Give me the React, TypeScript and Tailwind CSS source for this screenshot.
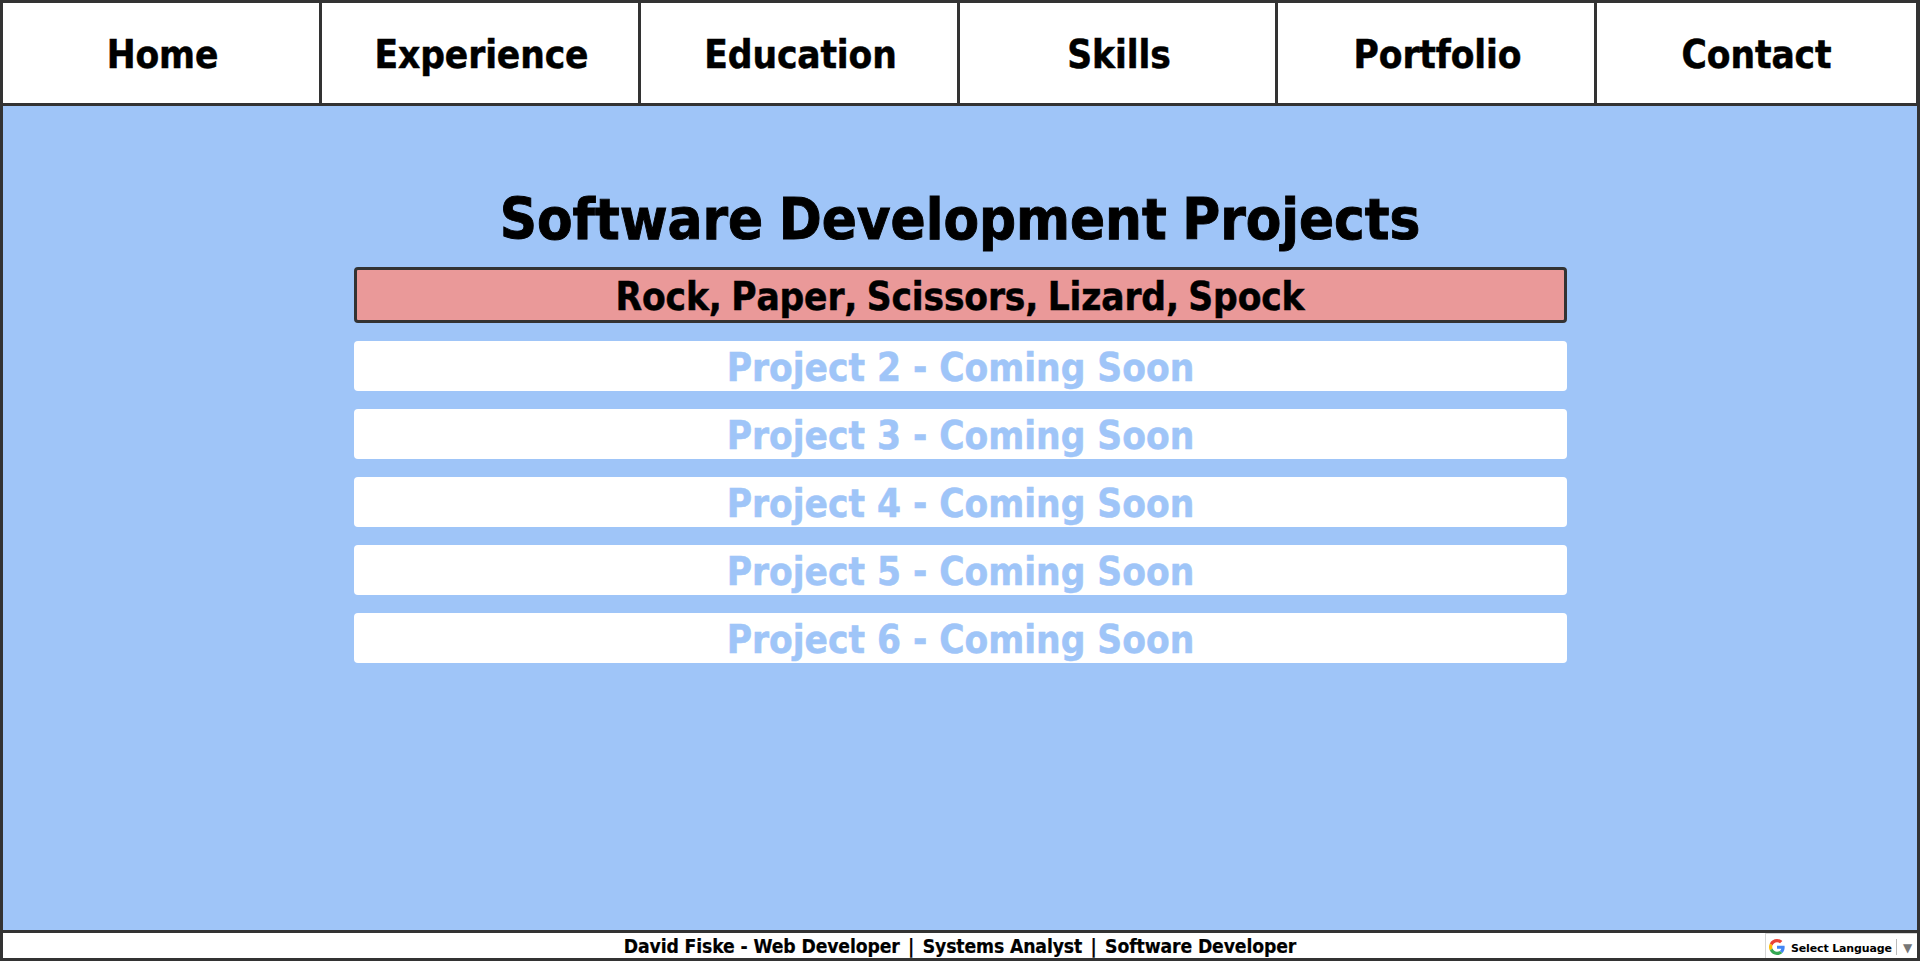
const nav = ["Home", "Experience", "Education", "Skills", "Portfolio", "Contact"];

const roles = ["David Fiske - Web Developer", "Systems Analyst", "Software Developer"];

const upcoming = [2, 3, 4, 5, 6];

function GoogleMark() {
  return (
    <svg viewBox="0 0 48 48" className="size-4 shrink-0">
      <path fill="#ea4335" d="M24 9.5c3.54 0 6.71 1.22 9.21 3.6l6.85-6.85C35.9 2.38 30.47 0 24 0 14.62 0 6.51 5.38 2.56 13.22l7.98 6.19C12.43 13.72 17.74 9.5 24 9.5z" />
      <path fill="#4285f4" d="M46.98 24.55c0-1.57-.15-3.09-.38-4.55H24v9.02h12.94c-.58 2.96-2.26 5.48-4.78 7.18l7.73 6c4.51-4.18 7.09-10.36 7.09-17.65z" />
      <path fill="#fbbc05" d="M10.53 28.59c-.48-1.45-.76-2.99-.76-4.59s.27-3.14.76-4.59l-7.98-6.19C.92 16.46 0 20.12 0 24c0 3.88.92 7.54 2.56 10.78l7.97-6.19z" />
      <path fill="#34a853" d="M24 48c6.48 0 11.93-2.13 15.89-5.81l-7.73-6c-2.15 1.45-4.92 2.3-8.16 2.3-6.26 0-11.57-4.22-13.47-9.91l-7.98 6.19C6.51 42.62 14.62 48 24 48z" />
    </svg>
  );
}

export default function App() {
  return (
    <div className="flex h-[961px] w-full flex-col border-[3px] border-[#333] bg-[#9fc5f8] font-['DejaVu_Sans_Condensed','DejaVu_Sans',sans-serif] font-bold [font-stretch:condensed] text-black">
      <nav className="grid h-[103px] shrink-0 grid-cols-[319px_319px_319px_318px_319px_319px] border-b-[3px] border-[#333] bg-[#333]">
        {nav.map((label) => (
          <a key={label} className="flex items-center justify-center border-r-[3px] border-[#333] bg-white pt-1 pl-[3px] text-[38.4px] leading-none tracking-[-0.1px] [-webkit-text-stroke:0.5px] last:border-r-0 last:pl-0">
            {label}
          </a>
        ))}
      </nav>
      <main className="flex flex-1 flex-col items-center pt-[71px]">
        <h1 className="mb-[5px] flex h-[85px] items-center text-[57.6px] leading-none tracking-[-0.04px] [-webkit-text-stroke:0.9px] [word-spacing:-2.4px]">Software Development Projects</h1>
        <div className="flex w-[1213px] flex-col gap-[18px] text-[38.4px] leading-none [-webkit-text-stroke:0.5px]">
          <a className="flex h-14 items-center justify-center rounded-[4px] border-[3px] border-[#333] bg-[#ea9999] pt-1 tracking-[-0.14px] [font-kerning:none] [word-spacing:-2.4px]">
            Rock, Paper, Scissors, Lizard, Spock
          </a>
          {upcoming.map((n) => (
            <div key={n} className="flex h-[50px] items-center justify-center rounded-[4px] bg-white pt-1 pl-px tracking-[-0.02px] text-[#9fc5f8]">
              Project {n} - Coming Soon
            </div>
          ))}
        </div>
      </main>
      <footer className="relative flex h-7 shrink-0 items-center justify-center border-t-[3px] border-[#333] bg-white pt-0.5 text-[19.2px] leading-none tracking-[-0.12px] [-webkit-text-stroke:0.2px]">
        {roles.map((role, i) => (
          <span key={role} className="flex">
            {i > 0 && <span className="w-[23px] text-center">|</span>}
            {role}
          </span>
        ))}
        <div className="absolute top-0 right-0 flex h-[25px] w-[152px] items-center border-t border-l border-[#d5d5d5] bg-white pt-0.5 pl-[3px] text-[11px] tracking-[-0.15px] whitespace-nowrap font-['DejaVu_Sans',sans-serif] [font-stretch:normal] [-webkit-text-stroke:0px]">
          <GoogleMark />
          <span className="ml-1.5 w-[102px] pt-0.5">Select Language</span>
          <span className="ml-[3px] h-4 w-px bg-[#bbb]" />
          <span className="ml-1.5 pt-px text-[12px] text-[#767676]">▼</span>
        </div>
      </footer>
    </div>
  );
}
